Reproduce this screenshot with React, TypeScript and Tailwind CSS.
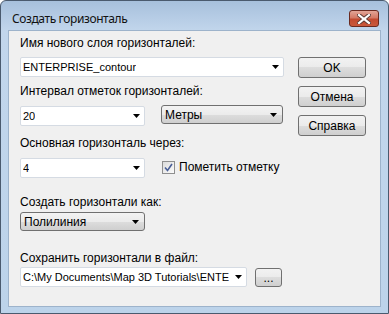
const Arrow = () => (
  <svg width="7" height="4" viewBox="0 0 7 4" className="shrink-0">
    <path d="M0 0h7L3.5 4z" fill="#000" />
  </svg>
);

const EditCombo = ({ value, w }: { value: string; w: string }) => (
  <div
    className={`${w} h-[20px] flex items-center justify-between bg-white border border-[#d5dbe3] rounded-[2px] pl-[2px] pr-[4px]`}
  >
    <span className="truncate text-[11px]">{value}</span>
    <Arrow />
  </div>
);

const ListCombo = ({ value, w }: { value: string; w: string }) => (
  <div
    className={`${w} h-[19px] flex items-center justify-between border border-[#707070] rounded-[3px] pl-[3px] pr-[5px] bg-[linear-gradient(#f3f3f3_0%,#ebebeb_50%,#dddddd_50%,#cfcfcf_100%)]`}
  >
    <span>{value}</span>
    <Arrow />
  </div>
);

const Button = ({ label, className = "" }: { label: string; className?: string }) => (
  <div
    className={`flex items-center justify-center border border-[#707070] rounded-[3px] bg-[linear-gradient(#f2f2f2_0%,#ebebeb_50%,#dddddd_50%,#cfcfcf_100%)] ${className}`}
  >
    {label}
  </div>
);

export default function App() {
  return (
    <div className="w-[389px] h-[314px] bg-white">
      <div className="w-full h-full flex flex-col rounded-t-[6px] border border-[#4a5a6e] bg-[linear-gradient(#a7c0dc_0px,#c2d6ec_30px,#bcd3ea_100%)] font-['Liberation_Sans',Arial,sans-serif] text-[12px] text-black">
        {/* title bar */}
        <div className="h-[29px] flex items-start justify-between pl-[11px] pr-[9px]">
          <span className="mt-[11px] text-[12px] leading-[14px] tracking-[-0.4px] font-['Noto_Sans',sans-serif] text-[#111]">
            Создать горизонталь
          </span>
          <div className="mt-[9px] w-[30px] h-[17px] flex items-center justify-center rounded-[3px] border border-[#6a2a20] bg-[linear-gradient(#e2a597_0%,#d47a66_45%,#c24a30_55%,#c9593c_100%)]">
            <svg width="14" height="10" viewBox="0 0 14 10">
              <path
                d="M2 1l5 4l5-4M2 9l5-4l5 4"
                stroke="#5a3a34"
                strokeWidth="4"
                fill="none"
                strokeLinecap="square"
              />
              <path
                d="M2 1l5 4l5-4M2 9l5-4l5 4"
                stroke="#fff"
                strokeWidth="2.2"
                fill="none"
                strokeLinecap="square"
              />
            </svg>
          </div>
        </div>

        {/* client area */}
        <div className="flex-1 mx-[7px] mb-[6px] bg-[#f0f0f0] border border-[#9db3cb] flex pl-[11px] pr-[14px]">
          <div className="w-[264px] flex flex-col">
            <div className="mt-[5px] h-[14px] leading-[14px]">Имя нового слоя горизонталей:</div>
            <div className="mt-[7px]">
              <EditCombo value="ENTERPRISE_contour" w="w-[264px]" />
            </div>

            <div className="mt-[7px] h-[14px] leading-[14px]">Интервал отметок горизонталей:</div>
            <div className="mt-[8px] flex items-start gap-[16px]">
              <EditCombo value="20" w="w-[125px]" />
              <div className="-mt-px">
                <ListCombo value="Метры" w="w-[122px]" />
              </div>
            </div>

            <div className="mt-[10px] h-[14px] leading-[14px]">Основная горизонталь через:</div>
            <div className="mt-[8px] flex items-start gap-[17px]">
              <EditCombo value="4" w="w-[125px]" />
              <div className="flex items-center gap-[4px]">
                <div className="w-[13px] h-[13px] border border-[#8f8f8f] bg-[linear-gradient(135deg,#dcdcdc,#fbfbfb)] flex items-center justify-center">
                  <svg width="9" height="9" viewBox="0 0 9 9">
                    <path d="M1 4.5l2.5 3L8 1" stroke="#4a5f97" strokeWidth="1.6" fill="none" />
                  </svg>
                </div>
                <span>Пометить отметку</span>
              </div>
            </div>

            <div className="mt-[17px] h-[14px] leading-[14px]">Создать горизонтали как:</div>
            <div className="mt-[3px]">
              <ListCombo value="Полилиния" w="w-[125px]" />
            </div>

            <div className="mt-[20px] h-[14px] leading-[14px]">Сохранить горизонтали в файл:</div>
            <div className="mt-[2px] flex items-start gap-[8px]">
              <EditCombo value="C:\My Documents\Map 3D Tutorials\ENTE" w="w-[227px]" />
              <Button label="..." className="w-[27px] h-[19px] mt-px leading-[10px]" />
            </div>
          </div>

          <div className="ml-[14px] mt-[26px] flex flex-col gap-[8px]">
            <Button label="OK" className="w-[68px] h-[21px]" />
            <Button label="Отмена" className="w-[68px] h-[21px]" />
            <Button label="Справка" className="w-[68px] h-[21px]" />
          </div>
        </div>
      </div>
    </div>
  );
}
